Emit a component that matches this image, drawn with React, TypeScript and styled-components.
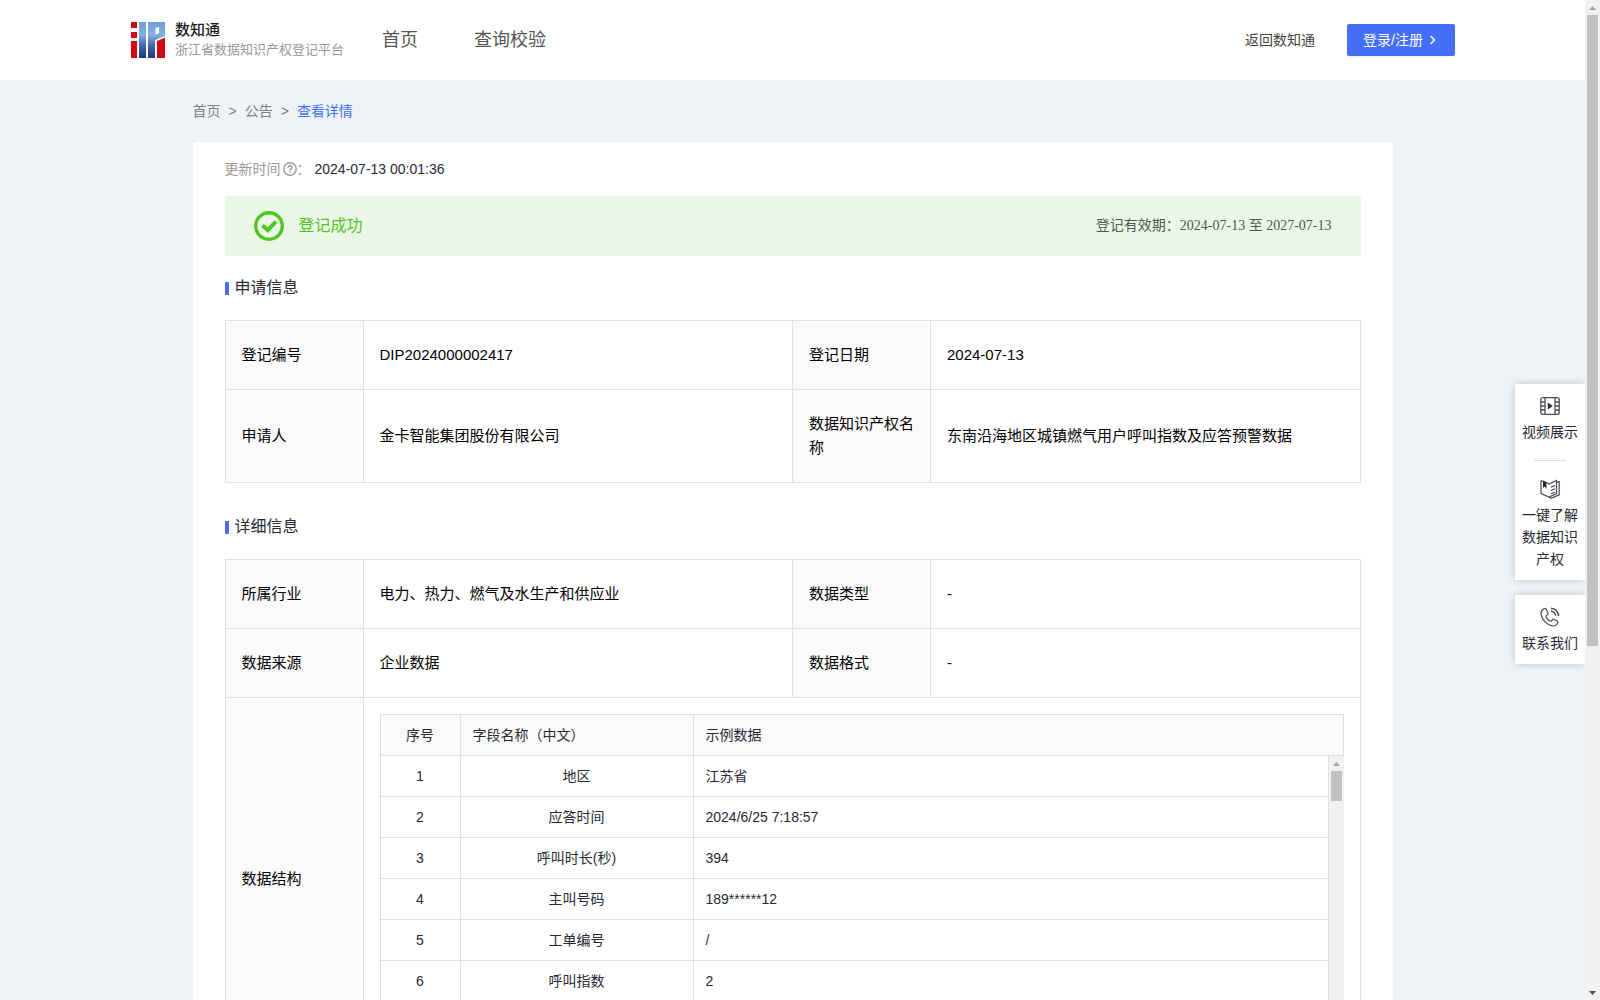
import React from "react";
import styled, { createGlobalStyle } from "styled-components";

const sans = `"Liberation Sans", "Noto Sans CJK SC", sans-serif`;
const serif = `"Liberation Serif", "Noto Sans CJK SC", serif`;
const line = "#e0e0e0";
const blue = "#456ff6";
const ink = "#272a36";

const GlobalStyle = createGlobalStyle`
  *, *::before, *::after { box-sizing: border-box; }
  body {
    margin: 0;
    font-family: ${sans};
    font-size: 14px;
    line-height: 22px;
    color: ${ink};
    background: #eef3f6;
  }
  a { color: inherit; text-decoration: none; }
  button { font: inherit; color: inherit; border: 0; background: none; padding: 0; cursor: pointer; }
  svg { display: block; flex: none; }
`;

const Shell = styled.div`
  position: relative;
  display: flex;
  height: 100vh;
  overflow: hidden;
`;

const Page = styled.div`
  flex: 1;
  min-width: 0;
  overflow-y: auto;
  scrollbar-width: none;
`;

const Header = styled.header`
  display: flex;
  align-items: center;
  height: 80px;
  padding: 0 130px;
  background: #fff;
`;

const Brand = styled.a`
  display: flex;
  align-items: center;
  gap: 10px;
`;

const BrandText = styled.span`
  display: flex;
  flex-direction: column;
`;

const BrandName = styled.strong`
  font-size: 15px;
  line-height: 20px;
  font-weight: 500;
  color: #1c1c1c;
`;

const BrandNote = styled.span`
  font-size: 13px;
  line-height: 20px;
  color: #999;
`;

const Nav = styled.nav`
  display: flex;
  flex: 1;
  gap: 56px;
  padding-left: 38px;
  font-size: 18px;
  line-height: 24px;
  color: #555;
`;

const Account = styled.div`
  display: flex;
  align-items: center;
  gap: 32px;
  color: #444;
`;

const LoginButton = styled.button`
  display: flex;
  align-items: center;
  gap: 4px;
  height: 32px;
  padding: 0 16px;
  border-radius: 2px;
  color: #fff;
  background: ${blue};
  box-shadow: 0 2px 0 rgba(0, 0, 0, 0.04);
`;

const Content = styled.main`
  max-width: 1200px;
  margin: 0 auto;
  padding-bottom: 60px;
`;

const Breadcrumb = styled.nav`
  display: flex;
  gap: 8px;
  padding: 20px 0;
  color: #808080;
`;

const Current = styled.a`
  color: ${blue};
`;

const Card = styled.section`
  padding: 16px 32px 40px;
  border-radius: 4px;
  background: #fff;
`;

const UpdateRow = styled.div`
  display: flex;
  align-items: center;
  color: #999;
`;

const HelpButton = styled.button`
  padding: 0 0 0 2px;
`;

const UpdateTime = styled.time`
  padding-left: 4px;
  color: ${ink};
`;

const Banner = styled.div`
  display: flex;
  align-items: center;
  gap: 15px;
  height: 60px;
  margin-top: 16px;
  padding: 0 29px;
  background: #ebf7e6;
`;

const BannerState = styled.span`
  flex: 1;
  font-size: 16px;
  line-height: 24px;
  color: #4fc61f;
`;

const BannerPeriod = styled.span`
  font-family: ${serif};
  color: #555;
`;

const SectionTitle = styled.h2`
  display: flex;
  align-items: center;
  gap: 6px;
  margin: 0;
  padding: 20px 0;
  font-size: 16px;
  line-height: 24px;
  font-weight: 400;

  &::before {
    content: "";
    width: 4px;
    height: 13px;
    background: ${blue};
  }
`;

const Block = styled.div`
  & + & {
    margin-top: 12px;
  }
`;

const InfoTable = styled.table`
  width: 100%;
  border-collapse: collapse;
  table-layout: fixed;
  font-size: 15px;
  line-height: 24px;
  color: #000;
`;

const Label = styled.th`
  width: 138px;
  padding: 22px 16px;
  border: 1px solid ${line};
  text-align: left;
  font-weight: 400;
  background: #fafafa;
`;

const Value = styled.td<{ $nested?: boolean }>`
  padding: ${(p) => (p.$nested ? "16px" : "22px 16px")};
  border: 1px solid ${line};
`;

const FieldGrid = styled.div`
  border-top: 1px solid ${line};
  border-left: 1px solid ${line};
  color: ${ink};
`;

const FieldBody = styled.div`
  display: flex;
  align-items: stretch;
  height: 287px;
  overflow: hidden;
`;

const FieldTable = styled.table`
  flex: 1;
  width: 100%;
  align-self: flex-start;
  border-spacing: 0;
  table-layout: fixed;
  font-size: 14px;
  line-height: 22px;
`;

const IndexCol = styled.col`
  width: 80px;
`;

const NameCol = styled.col`
  width: 233px;
`;

const FieldHead = styled.th<{ $center?: boolean }>`
  padding: 9px 12px;
  border-right: 1px solid ${line};
  border-bottom: 1px solid ${line};
  font-weight: 400;
  text-align: ${(p) => (p.$center ? "center" : "left")};
  background: #fafafa;
`;

const FieldCell = styled.td<{ $center?: boolean }>`
  padding: 9px 12px;
  border-right: 1px solid ${line};
  border-bottom: 1px solid ${line};
  text-align: ${(p) => (p.$center ? "center" : "left")};
`;

const Track = styled.div`
  display: flex;
  flex-direction: column;
  flex: none;
  width: 15px;
  background: #f1f1f1;
  z-index: 2;
`;

const Rail = styled.div`
  flex: 1;
  padding: 0 2px;
`;

const Thumb = styled.div<{ $size: string }>`
  height: ${(p) => p.$size};
  background: #c1c1c1;
`;

const Dock = styled.aside`
  position: absolute;
  top: 384px;
  right: 15px;
  display: flex;
  flex-direction: column;
  gap: 15px;
  width: 70px;
`;

const DockCard = styled.div`
  display: flex;
  flex-direction: column;
  align-items: center;
  padding: 12px 7px 10px;
  background: #fff;
  box-shadow: 0 0 8px rgba(0, 0, 0, 0.2);
`;

const DockButton = styled.button`
  display: flex;
  flex-direction: column;
  align-items: center;
  gap: 5px;
  width: 56px;
  text-align: center;
`;

const DockRule = styled.hr`
  width: 32px;
  height: 1px;
  margin: 17px 0 18px;
  border: 0;
  background: #ddd;
`;

const Logo = () => (
  <svg width="35" height="36" viewBox="0 0 35 36" aria-hidden="true">
    <defs>
      <linearGradient id="logoBlue" x1="0" y1="0" x2="0" y2="36" gradientUnits="userSpaceOnUse">
        <stop offset="0" stopColor="#6f9fd8" />
        <stop offset="0.35" stopColor="#86b0e6" />
        <stop offset="0.65" stopColor="#4468b2" />
        <stop offset="1" stopColor="#20357f" />
      </linearGradient>
    </defs>
    <path d="M1 0h6v6H1zM1 10h6v6H1zM1 19h6v17H1z" fill="#d00a10" />
    <path d="M9 0h7v36H9z" fill="url(#logoBlue)" />
    <path d="M18 0h17v14l-10 4V36h-7zM25.500 6v6.500l3.500-1.500V5z" fill="url(#logoBlue)" fillRule="evenodd" />
    <path d="M27 19l8-3.500V36h-8z" fill="#d00a10" />
  </svg>
);

const Chevron = () => (
  <svg width="12" height="12" viewBox="0 0 12 12" fill="none" stroke="#fff" strokeWidth="1.500" aria-hidden="true">
    <path d="M3.500 2L7.500 6 3.500 10" />
  </svg>
);

const HelpIcon = () => (
  <svg width="14" height="14" viewBox="0 0 14 14" fill="none" stroke="#999" strokeWidth="1.400" aria-hidden="true">
    <circle cx="7" cy="7" r="6.200" />
    <path d="M5 5.700C5 4.500 5.900 3.800 7 3.800s2 .7 2 1.800c0 1.300-2 1.400-2 2.900" />
    <path d="M7 9.500v1.200" />
  </svg>
);

const CheckIcon = () => (
  <svg width="30" height="30" viewBox="0 0 30 30" fill="none" stroke="#4fc61f" aria-hidden="true">
    <circle cx="15" cy="15" r="13.300" strokeWidth="3.400" />
    <path d="M8.500 14.400l5.200 4.800 8.200-8.600" strokeWidth="4" />
  </svg>
);

const VideoIcon = () => (
  <svg width="20" height="20" viewBox="0 0 20 20" fill="none" stroke="#4a4d57" strokeWidth="1.300" aria-hidden="true">
    <rect x="0.800" y="1.600" width="18.400" height="16.800" rx="2" />
    <path d="M5 1.600v16.800M15 1.600v16.800M1 6h4M1 10h4M1 14h4M15 6h4M15 10h4M15 14h4" />
    <path d="M7.800 6.500v7l5-3.500z" fill="#272a36" stroke="none" />
  </svg>
);

const BookIcon = () => (
  <svg width="20" height="20" viewBox="0 0 20 20" fill="none" stroke="#4a4d57" strokeWidth="1.200" aria-hidden="true">
    <path d="M1 1.500l2 .7M6.500 3.500L9 5l7.500-3.500v13L9 18l-8-3.500v-13" />
    <path d="M16.500 3.200l2.700-.4v13L11 19.400 9 18" />
    <path d="M10.800 8.200l4-1.600M10.800 11.500l4-1.600M10.800 14.800l4-1.600" />
    <path d="M3 1.500v7.500l1.800-1.400L6.500 10V3z" fill="#272a36" stroke="none" />
  </svg>
);

const PhoneIcon = () => (
  <svg width="20" height="20" viewBox="0 0 20 20" fill="none" stroke="#4a4d57" strokeWidth="1.200" aria-hidden="true">
    <path d="M4.200 1.800C2 2.600.6 4.600 1.200 7.600c1 5.400 5.600 10.300 11 11.300 2.600.4 4.800-1 5.600-3 .3-.8 0-1.400-.6-1.800l-3-1.700c-.7-.4-1.400-.2-1.900.4l-.8 1c-.4.500-1 .5-1.600.2-1.600-.9-3-2.500-3.700-4.100-.2-.6-.1-1.200.4-1.600l.8-.6c.6-.5.800-1.200.5-1.900L6.300 2.600c-.4-.8-1.200-1.100-2.100-.8z" />
    <path d="M11 1.200c4.200.2 7.400 3.400 7.600 7.800M11 4.200c2.600.2 4.400 2 4.600 4.600" strokeWidth="1.500" />
  </svg>
);

const Arrow = ({ down, color }: { down?: boolean; color: string }) => (
  <svg width="15" height="15" viewBox="0 0 15 15" aria-hidden="true">
    <path d={down ? "M4 6h7L7.500 10z" : "M4 10h7L7.500 6z"} fill={color} />
  </svg>
);

const Scrollbar = ({ size }: { size: string }) => (
  <Track aria-hidden="true">
    <Arrow color="#a3a3a3" />
    <Rail>
      <Thumb $size={size} />
    </Rail>
    <Arrow down color="#505050" />
  </Track>
);

const fields = [
  ["地区", "江苏省"],
  ["应答时间", "2024/6/25 7:18:57"],
  ["呼叫时长(秒)", "394"],
  ["主叫号码", "189******12"],
  ["工单编号", "/"],
  ["呼叫指数", "2"],
];

const FieldCols = () => (
  <colgroup>
    <IndexCol />
    <NameCol />
    <col />
  </colgroup>
);

const InfoRow = ({ cells }: { cells: [string, string][] }) => (
  <tr>
    {cells.map(([label, value]) => (
      <React.Fragment key={label}>
        <Label scope="row">{label}</Label>
        <Value>{value}</Value>
      </React.Fragment>
    ))}
  </tr>
);

export default function App() {
  return (
    <>
      <GlobalStyle />
      <Shell>
        <Page>
          <Header>
            <Brand href="#">
              <Logo />
              <BrandText>
                <BrandName>数知通</BrandName>
                <BrandNote>浙江省数据知识产权登记平台</BrandNote>
              </BrandText>
            </Brand>
            <Nav>
              <a href="#">首页</a>
              <a href="#">查询校验</a>
            </Nav>
            <Account>
              <a href="#">返回数知通</a>
              <LoginButton type="button">
                登录/注册
                <Chevron />
              </LoginButton>
            </Account>
          </Header>
          <Content>
            <Breadcrumb>
              <a href="#">首页</a>
              <span>&gt;</span>
              <a href="#">公告</a>
              <span>&gt;</span>
              <Current href="#">查看详情</Current>
            </Breadcrumb>
            <Card>
              <UpdateRow>
                <span>更新时间</span>
                <HelpButton type="button">
                  <HelpIcon />
                </HelpButton>
                <span>：</span>
                <UpdateTime>2024-07-13 00:01:36</UpdateTime>
              </UpdateRow>
              <Banner>
                <CheckIcon />
                <BannerState>登记成功</BannerState>
                <BannerPeriod>登记有效期：2024-07-13 至 2027-07-13</BannerPeriod>
              </Banner>
              <Block>
                <SectionTitle>申请信息</SectionTitle>
                <InfoTable>
                  <tbody>
                    <InfoRow cells={[["登记编号", "DIP2024000002417"], ["登记日期", "2024-07-13"]]} />
                    <InfoRow
                      cells={[
                        ["申请人", "金卡智能集团股份有限公司"],
                        ["数据知识产权名称", "东南沿海地区城镇燃气用户呼叫指数及应答预警数据"],
                      ]}
                    />
                  </tbody>
                </InfoTable>
              </Block>
              <Block>
                <SectionTitle>详细信息</SectionTitle>
                <InfoTable>
                  <tbody>
                    <InfoRow cells={[["所属行业", "电力、热力、燃气及水生产和供应业"], ["数据类型", "-"]]} />
                    <InfoRow cells={[["数据来源", "企业数据"], ["数据格式", "-"]]} />
                    <tr>
                      <Label scope="row">数据结构</Label>
                      <Value colSpan={3} $nested>
                        <FieldGrid>
                          <FieldTable>
                            <FieldCols />
                            <thead>
                              <tr>
                                <FieldHead $center>序号</FieldHead>
                                <FieldHead>字段名称（中文）</FieldHead>
                                <FieldHead>示例数据</FieldHead>
                              </tr>
                            </thead>
                          </FieldTable>
                          <FieldBody>
                            <FieldTable>
                              <FieldCols />
                              <tbody>
                                {fields.map(([name, sample], i) => (
                                  <tr key={name}>
                                    <FieldCell $center>{i + 1}</FieldCell>
                                    <FieldCell $center>{name}</FieldCell>
                                    <FieldCell>{sample}</FieldCell>
                                  </tr>
                                ))}
                              </tbody>
                            </FieldTable>
                            <Scrollbar size="30px" />
                          </FieldBody>
                        </FieldGrid>
                      </Value>
                    </tr>
                  </tbody>
                </InfoTable>
              </Block>
            </Card>
          </Content>
        </Page>
        <Dock>
          <DockCard>
            <DockButton type="button">
              <VideoIcon />
              视频展示
            </DockButton>
            <DockRule />
            <DockButton type="button">
              <BookIcon />
              一键了解数据知识产权
            </DockButton>
          </DockCard>
          <DockCard>
            <DockButton type="button">
              <PhoneIcon />
              联系我们
            </DockButton>
          </DockCard>
        </Dock>
        <Scrollbar size="65%" />
      </Shell>
    </>
  );
}
